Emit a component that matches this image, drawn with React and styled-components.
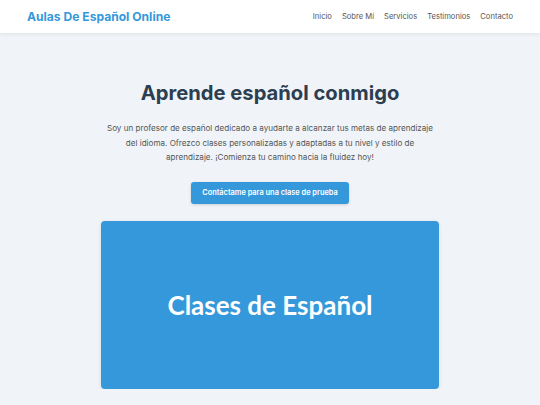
import React from "react";
import styled, { createGlobalStyle } from "styled-components";

const GlobalStyle = createGlobalStyle`
  * { box-sizing: border-box; }
  body {
    margin: 0;
    background-color: #f0f4f8;
    font-family: Inter, "Noto Sans", sans-serif;
  }
`;

const links = ["Inicio", "Sobre Mí", "Servicios", "Testimonios", "Contacto"];

function App() {
  return (
    <>
      <GlobalStyle />
      <Header>
        <Logo>Aulas De Español Online</Logo>
        <Nav>
          {links.map((l) => (
            <NavLink key={l} href="#">
              {l}
            </NavLink>
          ))}
        </Nav>
      </Header>
      <Hero>
        <Title>Aprende español conmigo</Title>
        <Intro>
          Soy un profesor de español dedicado a ayudarte a alcanzar tus metas de
          aprendizaje del idioma. Ofrezco clases personalizadas y adaptadas a tu
          nivel y estilo de aprendizaje. ¡Comienza tu camino hacia la fluidez hoy!
        </Intro>
        <CtaButton>Contáctame para una clase de prueba</CtaButton>
        <Banner>Clases de Español</Banner>
      </Hero>
    </>
  );
}

const Header = styled.header`
  display: flex;
  justify-content: space-between;
  align-items: center;
  height: 33px;
  padding: 0 27px;
  background-color: #fff;
  box-shadow: 0 1px 4px rgba(0, 0, 0, 0.08);
`;

const Logo = styled.div`
  font-size: 12.1px;
  font-weight: 700;
  color: #3498db;
`;

const Nav = styled.nav`
  display: flex;
  gap: 10px;
`;

const NavLink = styled.a`
  font-size: 7.6px;
  color: #555;
  text-decoration: none;
`;

const Hero = styled.main`
  display: flex;
  flex-direction: column;
  align-items: center;
  padding-top: 46px;
`;

const Title = styled.h1`
  margin: 0;
  font-size: 20.2px;
  font-weight: 700;
  color: #2c3e50;
  line-height: 28px;
`;

const Intro = styled.p`
  margin: 14px 0 0;
  width: 330px;
  font-size: 8.1px;
  line-height: 14.5px;
  color: #555;
  text-align: center;
`;

const CtaButton = styled.button`
  margin-top: 17px;
  height: 22px;
  padding: 0 11px;
  border: none;
  border-radius: 3px;
  background-color: #3498db;
  color: #fff;
  font-family: Inter, "Noto Sans", sans-serif;
  font-size: 7.4px;
  font-weight: 600;
  box-shadow: 0 1px 3px rgba(0, 0, 0, 0.15);
  cursor: pointer;
`;

const Banner = styled.div`
  display: flex;
  align-items: center;
  justify-content: center;
  margin-top: 17px;
  width: 338px;
  height: 168px;
  border-radius: 4px;
  background-color: #3498db;
  color: #fff;
  font-family: Lato, sans-serif;
  font-size: 26px;
  font-weight: 700;
  box-shadow: 0 1px 4px rgba(0, 0, 0, 0.1);
`;

export default App;
